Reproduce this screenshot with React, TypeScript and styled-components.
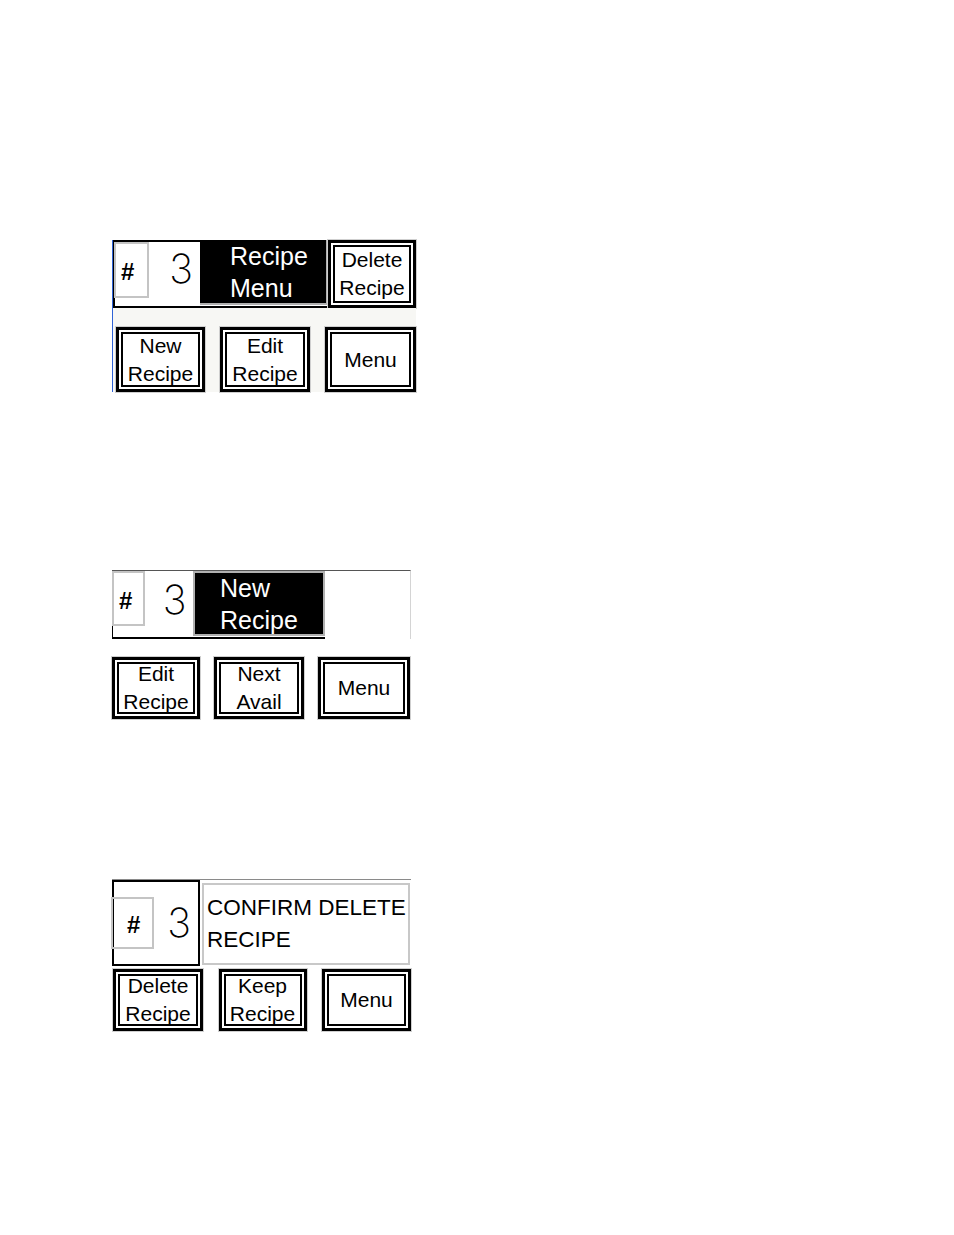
import styled, { createGlobalStyle } from "styled-components";

const GlobalStyle = createGlobalStyle`
    html, body {
        margin: 0;
        padding: 0;
        background: #fff;
    }
    body {
        font-family: "Liberation Sans", Arial, sans-serif;
        color: #000;
    }
`;

type ButtonSpec = { label: string[]; width: number };

const Page = styled.div`
    width: 954px;
    height: 1235px;
    padding-left: 112px;
    box-sizing: border-box;
    display: flex;
    flex-direction: column;
`;

const Panel = styled.div<{ $top: number; $width: number; $blue?: boolean }>`
    margin-top: ${(p) => p.$top}px;
    width: ${(p) => p.$width}px;
    display: flex;
    flex-direction: column;
    box-sizing: border-box;
    border-left: ${(p) => (p.$blue ? "1px solid #2f63d6" : "none")};
`;

const TopRow = styled.div<{ $height: number; $line?: string; $edge?: string }>`
    display: flex;
    height: ${(p) => p.$height}px;
    border-top: ${(p) => (p.$line ? `1px solid ${p.$line}` : "none")};
    border-right: ${(p) => (p.$edge ? `1px solid ${p.$edge}` : "none")};
    box-sizing: border-box;
`;

const NumberField = styled.div<{
    $width: number;
    $sides: string;
    $align: string;
}>`
    width: ${(p) => p.$width}px;
    box-sizing: border-box;
    display: flex;
    align-items: ${(p) => p.$align};
    border: 2px solid #000;
    border-width: ${(p) => p.$sides};
    background: #fff;
`;

const HashBox = styled.div<{
    $width: number;
    $height: number;
    $shift?: number;
    $inset?: number;
}>`
    width: ${(p) => p.$width}px;
    height: ${(p) => p.$height}px;
    margin-left: ${(p) => p.$shift ?? 0}px;
    box-sizing: border-box;
    border: 2px solid #c4c4c4;
    display: flex;
    align-items: center;
    padding: 4px 0 0 ${(p) => p.$inset ?? 5}px;
    font-weight: bold;
    font-size: 24px;
`;

const Digit = styled.div<{ $lift: number; $inset: number }>`
    flex: 1;
    align-self: center;
    text-align: center;
    font-family: Inter, "Liberation Sans", sans-serif;
    font-weight: 200;
    font-size: 40px;
    line-height: 40px;
    padding-left: ${(p) => p.$inset}px;
    margin-bottom: ${(p) => p.$lift}px;
`;

const TitleWrap = styled.div<{ $width: number }>`
    width: ${(p) => p.$width}px;
    border-bottom: 2px solid #000;
    display: flex;
`;

const Title = styled.div<{ $pad: number; $frame: string }>`
    flex: 1;
    background: #000;
    color: #fff;
    box-sizing: border-box;
    border: 2px solid #b0b0b0;
    border-width: ${(p) => p.$frame};
    padding-left: ${(p) => p.$pad}px;
    display: flex;
    flex-direction: column;
    justify-content: center;
    font-size: 25px;
    line-height: 32px;
    margin-bottom: 1px;
`;

const MessageBox = styled.div<{ $width: number }>`
    width: ${(p) => p.$width}px;
    margin: 3px 0 1px 2px;
    box-sizing: border-box;
    border: 2px solid #c8c8c8;
    padding-left: 3px;
    display: flex;
    flex-direction: column;
    justify-content: center;
    font-size: 22.5px;
    line-height: 32px;
`;

const Gap = styled.div<{ $height: number; $tint?: boolean }>`
    height: ${(p) => p.$height}px;
    background: ${(p) => (p.$tint ? "#f7f7f4" : "transparent")};
`;

const ButtonRow = styled.div<{ $height: number; $pad: string; $tint?: boolean }>`
    display: flex;
    justify-content: space-between;
    height: ${(p) => p.$height}px;
    padding: ${(p) => p.$pad};
    background: ${(p) => (p.$tint ? "#f7f7f4" : "transparent")};
`;

const ButtonOuter = styled.div<{ $width: number }>`
    width: ${(p) => p.$width}px;
    box-sizing: border-box;
    border: 3px solid #000;
    box-shadow: 0 0 0 1px #cfcfcf;
    padding: 2px;
    background: #fff;
    display: flex;
`;

const ButtonFace = styled.div`
    flex: 1;
    border: 2px solid #000;
    display: flex;
    flex-direction: column;
    align-items: center;
    justify-content: center;
    font-size: 21px;
    line-height: 28px;
    white-space: nowrap;
`;

function Button({ label, width }: ButtonSpec) {
    return (
        <ButtonOuter $width={width}>
            <ButtonFace>
                {label.map((line) => (
                    <span key={line}>{line}</span>
                ))}
            </ButtonFace>
        </ButtonOuter>
    );
}

function Lines({ lines }: { lines: string[] }) {
    return (
        <>
            {lines.map((line) => (
                <span key={line}>{line}</span>
            ))}
        </>
    );
}

export default function App() {
    return (
        <>
            <GlobalStyle />
            <Page>
                <Panel $top={240} $width={304} $blue>
                    <TopRow $height={68}>
                        <NumberField $width={87} $sides="2px 0 2px 2px" $align="flex-start">
                            <HashBox $width={35} $height={56} $shift={-1}>
                                #
                            </HashBox>
                            <Digit $lift={10} $inset={13}>
                                3
                            </Digit>
                        </NumberField>
                        <TitleWrap $width={128}>
                            <Title $pad={30} $frame="0 2px 2px 0">
                                <Lines lines={["Recipe", "Menu"]} />
                            </Title>
                        </TitleWrap>
                        <Button label={["Delete", "Recipe"]} width={88} />
                    </TopRow>
                    <Gap $height={19} $tint />
                    <ButtonRow $height={65} $pad="0 0 0 3px" $tint>
                        <Button label={["New", "Recipe"]} width={89} />
                        <Button label={["Edit", "Recipe"]} width={90} />
                        <Button label={["Menu"]} width={91} />
                    </ButtonRow>
                </Panel>

                <Panel $top={178} $width={299}>
                    <TopRow $height={69} $line="#555" $edge="#d4d4d4">
                        <NumberField $width={81} $sides="0 0 2px 1px" $align="flex-start">
                            <HashBox $width={33} $height={55} $shift={-1}>
                                #
                            </HashBox>
                            <Digit $lift={8} $inset={11}>
                                3
                            </Digit>
                        </NumberField>
                        <TitleWrap $width={132}>
                            <Title $pad={25} $frame="2px">
                                <Lines lines={["New", "Recipe"]} />
                            </Title>
                        </TitleWrap>
                    </TopRow>
                    <Gap $height={18} />
                    <ButtonRow $height={62} $pad="0 1px 0 0">
                        <Button label={["Edit", "Recipe"]} width={88} />
                        <Button label={["Next", "Avail"]} width={90} />
                        <Button label={["Menu"]} width={92} />
                    </ButtonRow>
                </Panel>

                <Panel $top={160} $width={299}>
                    <TopRow $height={87} $line="#8a8a8a">
                        <NumberField $width={88} $sides="2px" $align="center">
                            <HashBox $width={43} $height={52} $shift={-3} $inset={14}>
                                #
                            </HashBox>
                            <Digit $lift={0} $inset={6}>
                                3
                            </Digit>
                        </NumberField>
                        <MessageBox $width={208}>
                            <Lines lines={["CONFIRM DELETE", "RECIPE"]} />
                        </MessageBox>
                    </TopRow>
                    <Gap $height={3} />
                    <ButtonRow $height={62} $pad="0 0 0 1px">
                        <Button label={["Delete", "Recipe"]} width={90} />
                        <Button label={["Keep", "Recipe"]} width={88} />
                        <Button label={["Menu"]} width={89} />
                    </ButtonRow>
                </Panel>
            </Page>
        </>
    );
}
